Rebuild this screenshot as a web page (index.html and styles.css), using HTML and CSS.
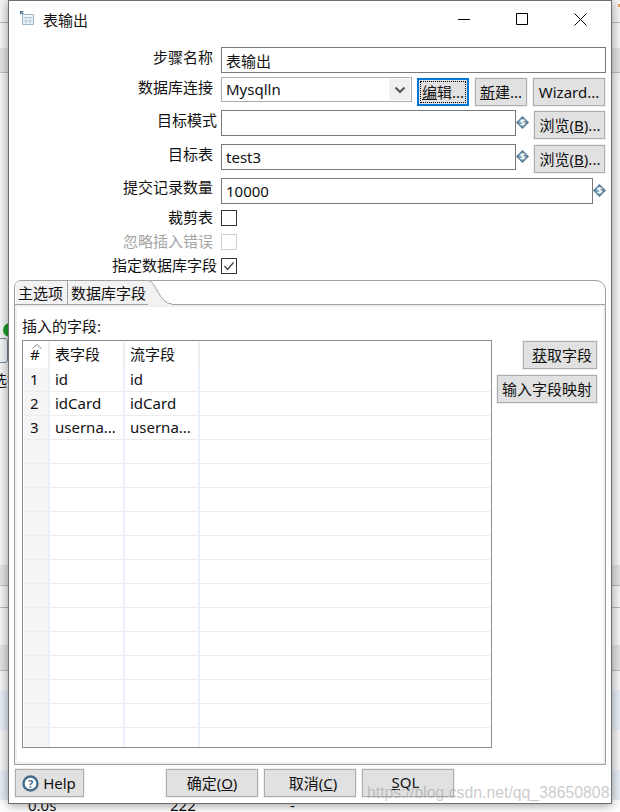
FILE: index.html
```html
<!DOCTYPE html>
<html lang="zh">
<head>
<meta charset="utf-8">
<title>表输出</title>
<link rel="stylesheet" href="styles.css">
</head>
<body>
<div class="backdrop">
  <div class="bg-line bg-l1"></div>
  <div class="bg-band bg-b1"></div>
  <div class="bg-band bg-b2"></div>
  <div class="bg-line bg-l2"></div>
  <div class="bg-band bg-b3"></div>
  <div class="bg-row bg-r1"></div>
  <div class="bg-row bg-r2"></div>
  <div class="bg-orange"></div>
  <div class="bg-dot"></div>
  <div class="bg-node"></div>
  <div class="bg-text">选择</div>
  <div class="bg-foot"><span class="bg-a">0.0s</span><span class="bg-b">222</span><span class="bg-c">-</span></div>
</div>
<main class="dialog">
  <header class="titlebar">
    <svg class="app-icon" width="14" height="14" viewBox="0 0 14 14"><path d="M0 0h3.500v1H2l2.500 2.500-1 1L1 2v1.500H0z" fill="#4f7490"/><path d="M2.500 3.500h11v10h-11z" fill="#f2f6fa" stroke="#9db6c7"/><path d="M2.500 6.500h11M2.500 10h11M6 6.500v7M10 6.500v7" stroke="#b3c7d5" fill="none"/></svg>
    <span class="title">表输出</span>
    <div class="winctl">
      <svg width="12" height="12" viewBox="0 0 12 12"><path d="M0 6.500h12" stroke="#000"/></svg>
      <svg width="12" height="12" viewBox="0 0 12 12"><path d="M.5.500h11v11H.5z" stroke="#000" fill="none"/></svg>
      <svg width="13" height="13" viewBox="0 0 13 13"><path d="M.5.500l12 12M12.500.500l-12 12" stroke="#000" fill="none"/></svg>
    </div>
  </header>

  <section class="form">
    <div class="row r30"><label class="lbl">步骤名称</label><input class="field f-full" value="表输出"></div>
    <div class="row r33">
      <label class="lbl">数据库连接</label>
      <div class="combo"><span>Mysqlln</span><span class="combo-btn"><svg width="12" height="8" viewBox="0 0 12 8"><path d="M1.500 1.500L6 6l4.500-4.500" fill="none" stroke="#555" stroke-width="2"/></svg></span></div>
      <button class="btn b-edit focus"><span class="inner"><u>编</u>辑...</span></button>
      <button class="btn b-new"><u>新</u>建...</button>
      <button class="btn b-wiz">Wizard...</button>
    </div>
    <div class="row r34">
      <label class="lbl lbl-wide">目标模式</label><input class="field f-mid">
      <svg class="var" width="13" height="13" viewBox="0 0 14 14"><use href="#var"/></svg>
      <button class="btn b-browse">浏览(<u>B</u>)...</button>
    </div>
    <div class="row r34">
      <label class="lbl">目标表</label><input class="field f-mid" value="test3">
      <svg class="var" width="13" height="13" viewBox="0 0 14 14"><use href="#var"/></svg>
      <button class="btn b-browse">浏览(<u>B</u>)...</button>
    </div>
    <div class="row r32">
      <label class="lbl lbl-up">提交记录数量</label><input class="field f-long" value="10000">
      <svg class="var" width="13" height="13" viewBox="0 0 14 14"><use href="#var"/></svg>
    </div>
    <div class="row r24"><label class="lbl lbl-check">裁剪表</label><span class="check"></span></div>
    <div class="row r24"><label class="lbl lbl-check lbl-off">忽略插入错误</label><span class="check check-off"></span></div>
    <div class="row r22"><label class="lbl lbl-check lbl-wide">指定数据库字段</label><span class="check"><svg width="14" height="14" viewBox="0 0 14 14"><path d="M2.500 7l3 3.500 6-7" fill="none" stroke="#444" stroke-width="1.300"/></svg></span></div>
  </section>

  <section class="tabs">
    <div class="tabbar">
      <div class="tab">主选项</div>
      <div class="tab tab-on">数据库字段
        <svg class="tab-curve" width="24" height="25" viewBox="0 0 24 25"><path d="M0 0c8 0 11 24 24 24v1H0z" fill="#f2f2f2"/><path d="M0 .5c8 0 11 23.500 24 23.500" fill="none" stroke="#a0a0a0"/></svg>
      </div>
    </div>
    <div class="tabbody">
      <div class="cap">插入的字段:</div>
      <div class="tablewrap">
        <div class="tablebox">
          <table class="grid">
            <thead><tr><th class="c0"><svg class="sort" width="10" height="5" viewBox="0 0 10 5"><path d="M.5 4.500l4.500-4 4.500 4" fill="none" stroke="#888"/></svg>#</th><th class="c1">表字段</th><th class="c2">流字段</th><th class="c3"></th></tr></thead>
            <tbody>
              <tr><td class="c0">1</td><td class="c1">id</td><td class="c2">id</td><td class="c3"></td></tr>
              <tr><td class="c0">2</td><td class="c1">idCard</td><td class="c2">idCard</td><td class="c3"></td></tr>
              <tr><td class="c0">3</td><td class="c1">userna...</td><td class="c2">userna...</td><td class="c3"></td></tr>
              <tr><td class="c0"></td><td class="c1"></td><td class="c2"></td><td class="c3"></td></tr>
              <tr><td class="c0"></td><td class="c1"></td><td class="c2"></td><td class="c3"></td></tr>
              <tr><td class="c0"></td><td class="c1"></td><td class="c2"></td><td class="c3"></td></tr>
              <tr><td class="c0"></td><td class="c1"></td><td class="c2"></td><td class="c3"></td></tr>
              <tr><td class="c0"></td><td class="c1"></td><td class="c2"></td><td class="c3"></td></tr>
              <tr><td class="c0"></td><td class="c1"></td><td class="c2"></td><td class="c3"></td></tr>
              <tr><td class="c0"></td><td class="c1"></td><td class="c2"></td><td class="c3"></td></tr>
              <tr><td class="c0"></td><td class="c1"></td><td class="c2"></td><td class="c3"></td></tr>
              <tr><td class="c0"></td><td class="c1"></td><td class="c2"></td><td class="c3"></td></tr>
              <tr><td class="c0"></td><td class="c1"></td><td class="c2"></td><td class="c3"></td></tr>
              <tr><td class="c0"></td><td class="c1"></td><td class="c2"></td><td class="c3"></td></tr>
              <tr><td class="c0"></td><td class="c1"></td><td class="c2"></td><td class="c3"></td></tr>
              <tr><td class="c0 last"></td><td class="c1 last"></td><td class="c2 last"></td><td class="c3 last"></td></tr>
            </tbody>
          </table>
        </div>
        <div class="sidebtns">
          <button class="btn b-get"><u>获</u>取字段</button>
          <button class="btn b-map">输入字段映射</button>
        </div>
      </div>
    </div>
  </section>

  <footer class="foot">
    <button class="btn b-help"><svg width="17" height="17" viewBox="0 0 17 17"><circle cx="8.500" cy="8.500" r="7" fill="#fff" stroke="#456c8a" stroke-width="2.400"/><text x="8.500" y="12.500" text-anchor="middle" class="qmark">?</text></svg>Help</button>
    <div class="foot-mid">
      <button class="btn b-foot">确定(<u>O</u>)</button>
      <button class="btn b-foot b-cancel">取消(<u>C</u>)</button>
      <button class="btn b-foot b-sql"><u>S</u>QL</button>
    </div>
  </footer>
</main>
<div class="watermark">https://blog.csdn.net/qq_38650808</div>
<svg class="defs" width="0" height="0"><defs><g id="var"><path d="M7 0l7 7-7 7-7-7z" fill="#4f7793"/><circle cx="7" cy="7" r="4.300" fill="#7f9fb5"/><text x="7" y="10.300" text-anchor="middle" class="dollar">$</text></g></defs></svg>
</body>
</html>
```
FILE: styles.css
```css
* { box-sizing: border-box; }
html, body { margin: 0; padding: 0; }
body {
  width: 620px; height: 812px; overflow: hidden; position: relative;
  background: #fafafa;
  font: 15px/20px "Noto Sans", "Noto Sans CJK SC", sans-serif;
  color: #111;
}
.backdrop { position: absolute; inset: 0; background: #f6f6f6; overflow: hidden; }
.bg-line { position: absolute; left: 0; right: 0; height: 1px; background: #b9b9b9; }
.bg-l1 { top: 22px; }
.bg-l2 { top: 607px; }
.bg-band { position: absolute; left: 0; right: 0; background: #e3e3e3; border-bottom: 1px solid #bdbdbd; }
.bg-b1 { top: 48px; height: 25px; }
.bg-b2 { top: 565px; height: 21px; }
.bg-b3 { top: 645px; height: 26px; }
.bg-row { position: absolute; left: 0; right: 0; background: #e8eef6; }
.bg-r1 { top: 690px; height: 40px; }
.bg-r2 { top: 770px; height: 30px; }
.bg-orange { position: absolute; right: 0; top: 4px; width: 2px; height: 3px; background: #f0a040; }
.bg-dot { position: absolute; left: 3px; top: 323px; width: 14px; height: 14px; border-radius: 50%; background: #1f9d2f; }
.bg-node { position: absolute; left: -10px; top: 338px; width: 18px; height: 25px; border: 1px solid #7a8a98; border-radius: 3px; background: #f4f6f8; }
.bg-text { position: absolute; left: -8px; top: 370px; white-space: nowrap; }
.bg-foot { position: absolute; left: 0; right: 0; top: 800px; height: 12px; background: #fff; overflow: hidden; }
.bg-foot span { position: absolute; top: -5px; line-height: 20px; }
.bg-a { left: 28px; }
.bg-b { left: 170px; }
.bg-c { left: 290px; }

.dialog {
  position: absolute; left: 8px; top: 0; width: 604px; height: 804px;
  background: #fff; border: 1px solid #6f6f6f;
  box-shadow: 0 1px 10px rgba(0,0,0,.42);
  display: flex; flex-direction: column;
}
.titlebar { height: 46px; display: flex; align-items: center; padding: 0 24px 6px 11px; flex: none; }
.app-icon { flex: none; margin-top: -6px; }
.title { margin-left: 9px; color: #111; margin-top: -3px; }
.winctl { margin-left: auto; display: flex; align-items: center; gap: 46px; margin-top: -4px; }

.form { flex: none; }
.row { display: flex; align-items: flex-start; }
.r30 { height: 30px; } .r33 { height: 33px; } .r34 { height: 34px; } .r32 { height: 32px; }
.r24 { height: 24px; } .r22 { height: 22px; }
.lbl { width: 204px; margin-right: 8px; text-align: right; line-height: 20px; white-space: nowrap; }
.lbl-wide { width: 208px; margin-right: 4px; }
.lbl-up { margin-top: -1px; }
.lbl-check { line-height: 14px; }
.lbl-off { color: #a4a4a4; }
.field {
  height: 26px; border: 1px solid #7a7a7a; background: #fff; padding: 0 4px; margin: 0;
  font: inherit; color: #111; outline: none; border-radius: 0;
}
.f-full { width: 385px; }
.f-mid { width: 295px; }
.f-long { width: 372px; }
.combo {
  width: 191px; height: 25px; border: 1px solid #ababab; padding: 0 0 0 4px;
  display: flex; align-items: center; justify-content: space-between; line-height: 23px;
}
.combo-btn { width: 21px; height: 21px; margin-right: 1px; background: #f0f0f0; display: flex; align-items: center; justify-content: center; }
.var { flex: none; margin: 6px 0 0 0; }

.btn {
  height: 28px; padding: 0; margin: 0; border: 1px solid #adadad; background: #e1e1e1;
  font: inherit; color: #111; border-radius: 0; white-space: nowrap;
  display: inline-flex; align-items: center; justify-content: center;
  outline: 1px solid #f0f0f0;
}
.b-edit { width: 52px; margin: 1px 0 0 5px; }
.focus { border: 2px solid #0078d7; outline: none; }
.inner { border: 1px dotted #000; height: 22px; width: 46px; display: flex; align-items: center; justify-content: center; }
.b-new { width: 52px; margin: 1px 0 0 6px; }
.b-wiz { width: 72px; margin: 1px 0 0 6px; }
.b-browse { width: 71px; margin: 1px 0 0 5px; padding-left: 1px; }
.b-get { width: 74px; margin-left: 26px; padding-left: 4px; }
.b-map { width: 100px; margin-top: 6px; }

.check { width: 16px; height: 16px; border: 1px solid #333; display: flex; align-items: center; justify-content: center; background: #fff; }
.check-off { border-color: #cfcfcf; }

.tabs { width: 592px; height: 485px; margin-left: 5px; flex: none; display: flex; flex-direction: column; }
.tabbar { height: 25px; flex: none; display: flex; border: 1px solid #a0a0a0; border-radius: 7px 10px 0 0; padding-left: 1px; }
.tab { height: 23px; line-height: 24px; background: #f2f2f2; padding: 0 0 0 2px; width: 52px; white-space: nowrap; border-right: 1px solid #a0a0a0; border-radius: 6px 0 0 0; }
.tab-on { position: relative; width: 80px; padding: 0 0 0 3px; border-right: 0; border-radius: 5px 0 0 0; }
.tab-curve { position: absolute; left: 80px; top: -1px; }
.tabbody { flex: 1; border: 1px solid #a0a0a0; border-top: 0; box-shadow: inset 0 0 0 2px #f0f0f0; padding: 11px 8px 0 7px; background: #fff; }
.cap { height: 24px; }
.tablewrap { display: flex; align-items: flex-start; }
.tablebox { width: 470px; height: 408px; border: 1px solid #8a8a90; padding: 1px; flex: none; background: #fff; overflow: hidden; }
.grid { border-collapse: separate; border-spacing: 0; table-layout: fixed; width: 466px; }
.grid th, .grid td { padding: 0 0 2px 5px; font-weight: 400; text-align: left; height: 24px; overflow: hidden; white-space: nowrap; border-bottom: 1px solid #ececec; border-right: 2px solid #e9f0f8; line-height: 20px; }
.grid th { height: 26px; border-bottom: 0; border-right: 2px solid #ececec; position: relative; }
.grid .c0 { width: 26px; background: #f5f5f5; padding-left: 6px; }
.grid th.c0 { background: #fff; }
.grid .c1, .grid .c2 { width: 75px; }
.grid .c3 { border-right: 0; }
.grid th.c3 { border: 0; }
.grid td.last { border-bottom: 0; height: 19px; }
.sort { position: absolute; left: 8px; top: 2px; }
.sidebtns { width: 100px; margin-left: 5px; padding-top: 1px; display: flex; flex-direction: column; align-items: flex-start; }

.foot { height: 38px; flex: none; display: flex; padding: 4px 0 0 6px; }
.b-help { width: 69px; gap: 4px; padding-right: 1px; }
.foot-mid { display: flex; gap: 6px; margin-left: 82px; }
.b-foot { width: 92px; padding-bottom: 1px; }
.b-cancel { padding-left: 6px; }
.b-sql { padding-right: 5px; padding-bottom: 3px; }
.qmark { font: 700 11px "Noto Sans", sans-serif; fill: #456c8a; }
.dollar { font: 700 9.500px "Noto Sans", sans-serif; fill: #fff; }
.defs { position: absolute; }
.watermark { position: absolute; left: 367px; top: 781px; font: 15.8px/24px "Liberation Sans", sans-serif; color: rgba(150,150,150,.5); white-space: nowrap; }
```
